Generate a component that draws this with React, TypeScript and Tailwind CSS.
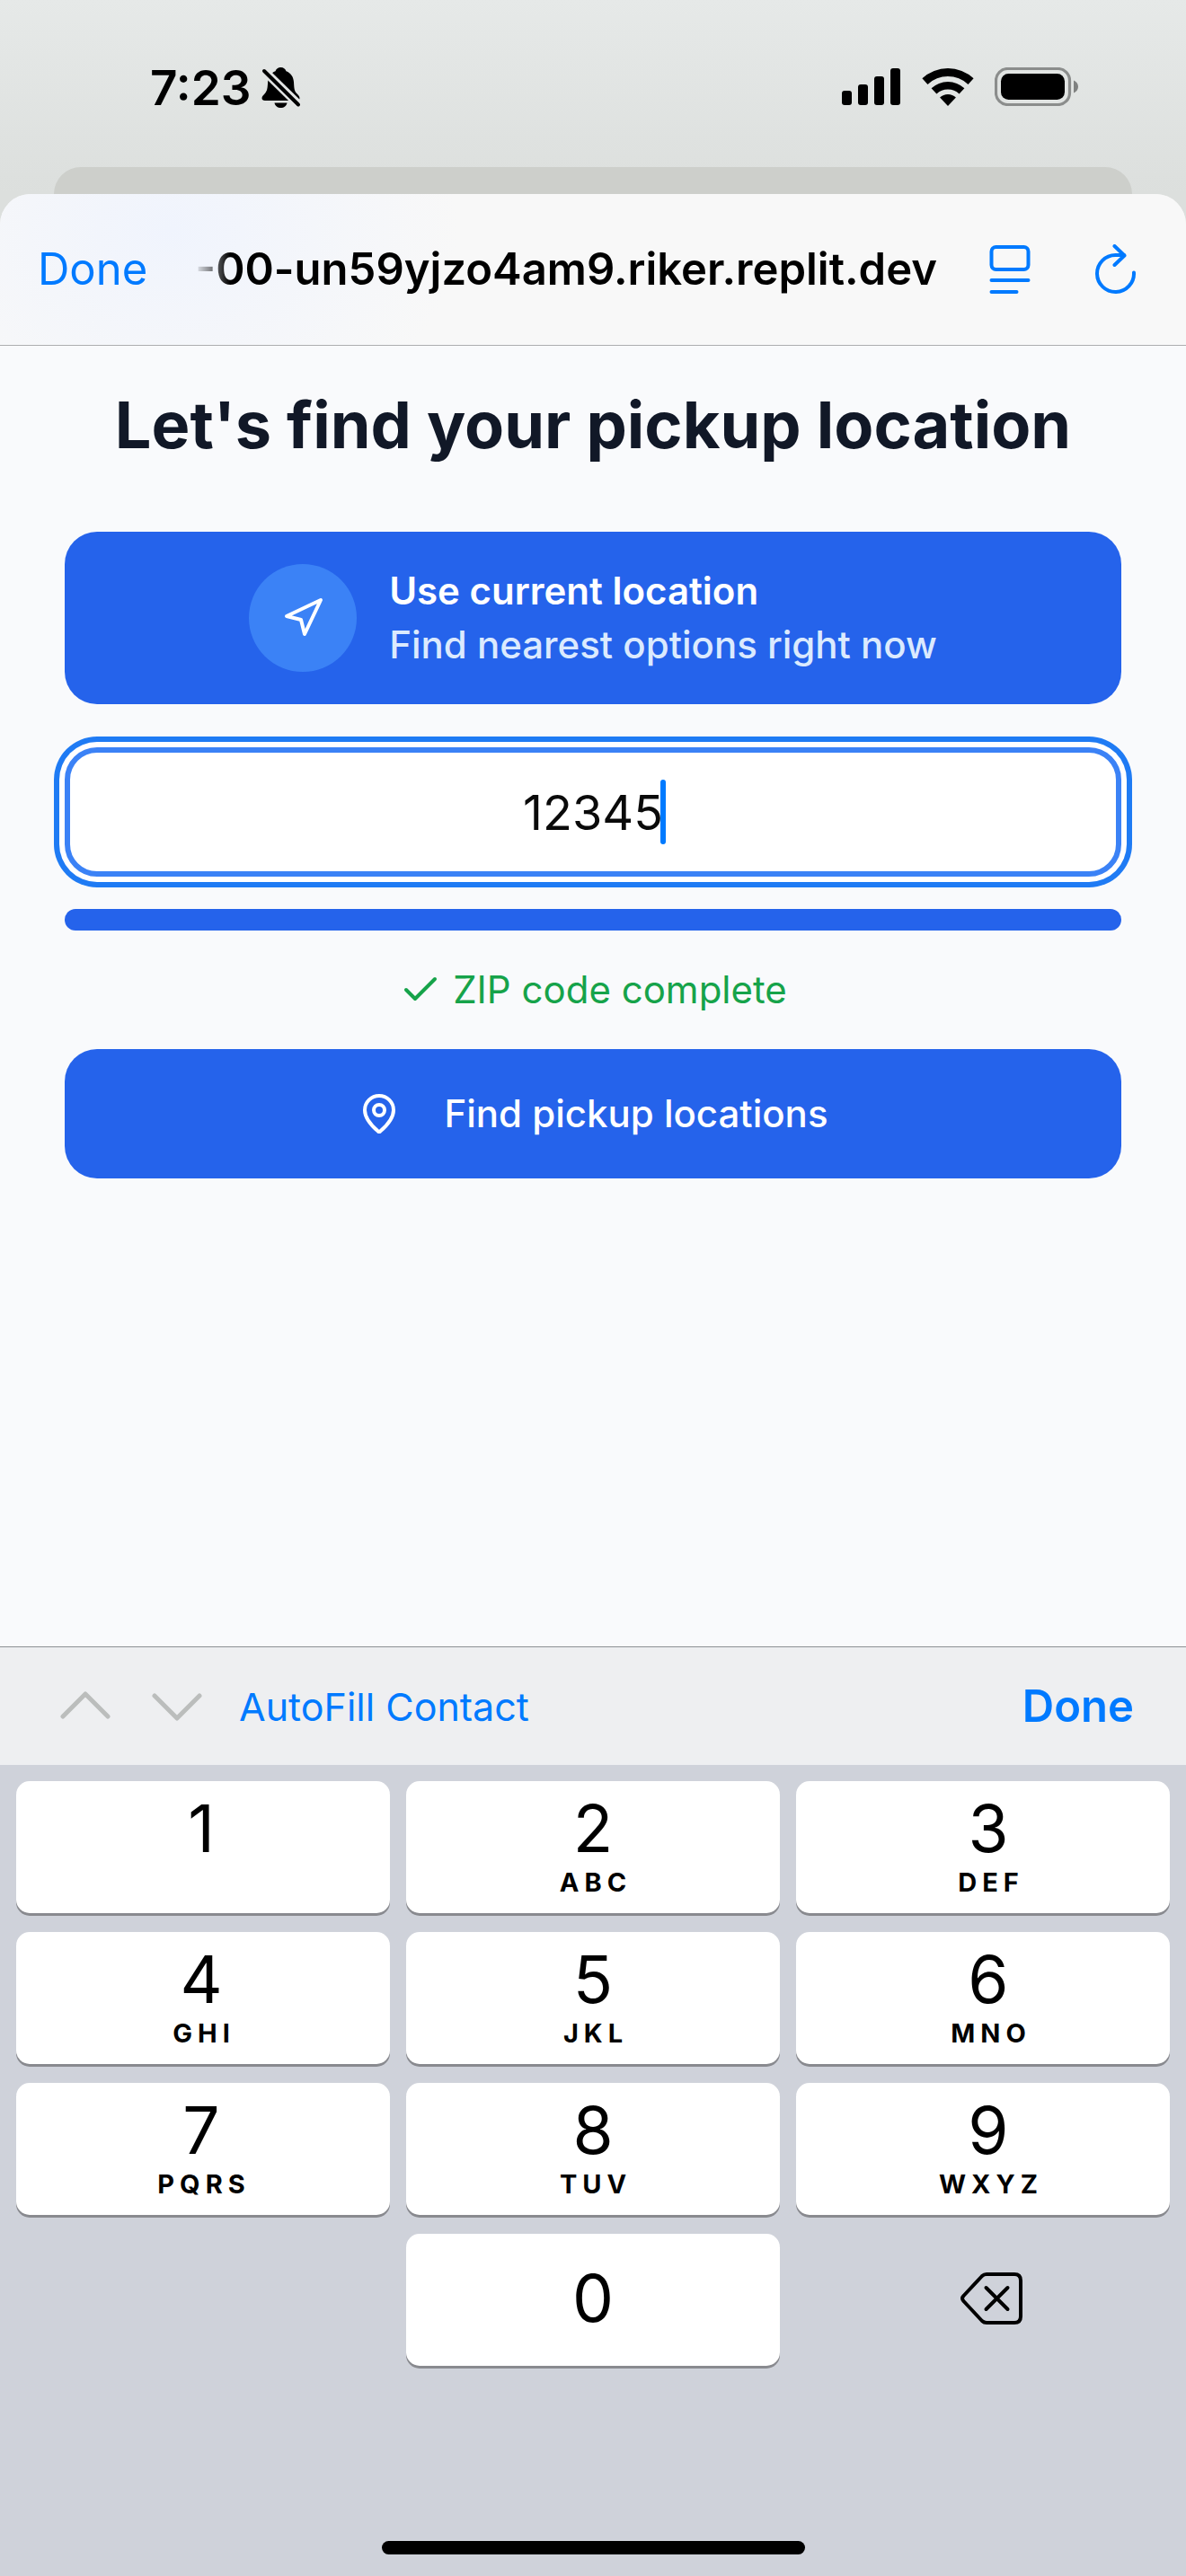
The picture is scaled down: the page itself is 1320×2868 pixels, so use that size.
import type { ReactNode } from "react";
import { Check, MapPin, Navigation } from "lucide-react";

const KEYS = [
  { digit: "1", letters: "" },
  { digit: "2", letters: "ABC" },
  { digit: "3", letters: "DEF" },
  { digit: "4", letters: "GHI" },
  { digit: "5", letters: "JKL" },
  { digit: "6", letters: "MNO" },
  { digit: "7", letters: "PQRS" },
  { digit: "8", letters: "TUV" },
  { digit: "9", letters: "WXYZ" },
];

function BellOffIcon() {
  return (
    <svg width="44" height="46" viewBox="0 0 44 46" fill="none" aria-hidden="true">
      <path
        d="M21.500 0c3 0 5.200 1.800 6 4.200 5.200 2 8.200 6.300 8.500 12.300.4 7.500.6 9.600 3.200 12.600 1.600 1.900 3.300 3 3.300 5.100 0 1.800-1.300 2.800-3.400 2.800H4c-2.200 0-3.500-1-3.500-2.800 0-2.300 1.900-3.400 3.600-5.500 2.300-2.800 2.600-5 3-12.200.3-6 3.300-10.300 8.400-12.300C16.300 1.800 18.500 0 21.500 0Z"
        fill="black"
      />
      <path d="M14.500 39.500h14c-.6 3.300-3.400 5.600-7 5.600s-6.400-2.300-7-5.600Z" fill="black" />
      <path d="M-2 -1 45 45" stroke="#e3e5e4" strokeWidth="9.500" />
      <path d="M3 4 41 41.500" stroke="black" strokeWidth="4" strokeLinecap="round" />
    </svg>
  );
}

function SignalIcon() {
  return (
    <svg width="66" height="42" viewBox="0 0 66 42" aria-hidden="true">
      <rect x="0" y="25" width="11" height="16" rx="3" />
      <rect x="18" y="18" width="11" height="23" rx="3" />
      <rect x="36" y="9" width="11" height="32" rx="3" />
      <rect x="54" y="0" width="11" height="41" rx="3" />
    </svg>
  );
}

function WifiIcon() {
  return (
    <svg width="58" height="42" viewBox="0 0 58 42" aria-hidden="true">
      <path d="M.4 11.300A42 42 0 0 1 57.600 11.300L51.500 17.900A33 33 0 0 0 6.500 17.900Z" />
      <path d="M10.600 22.300A27 27 0 0 1 47.400 22.300L41.600 28.500A18.500 18.500 0 0 0 16.400 28.500Z" />
      <path d="M20.100 32.500A13 13 0 0 1 37.900 32.500L29 42Z" />
    </svg>
  );
}

function BatteryIcon() {
  return (
    <svg width="94" height="43" viewBox="0 0 94 43" aria-hidden="true">
      <rect x="1.500" y="1.500" width="82" height="40" rx="13" fill="none" stroke="#8b8d8c" strokeWidth="3.200" />
      <rect x="7" y="7" width="71" height="29" rx="8.500" />
      <path d="M88 14.500c3 1.200 5 3.900 5 7s-2 5.800-5 7Z" fill="#7f8180" />
    </svg>
  );
}

function PageMenuIcon() {
  return (
    <svg width="46" height="54" viewBox="0 0 46 54" fill="none" stroke="#007aff" strokeWidth="4" strokeLinecap="round" aria-hidden="true">
      <rect x="2.500" y="2" width="41" height="25" rx="5" />
      <path d="M2.500 39h41M2.500 52h28" />
    </svg>
  );
}

function ReloadIcon() {
  return (
    <svg width="46" height="56" viewBox="0 0 46 56" fill="none" stroke="#007aff" strokeWidth="4" strokeLinecap="round" strokeLinejoin="round" aria-hidden="true">
      <path d="M43 31.500A20.500 20.500 0 1 1 22.500 12H32" />
      <path d="M21.500 2 32.500 12.500 21.500 23" />
    </svg>
  );
}

function ChevronIcon({ up = false }: { up?: boolean }) {
  return (
    <svg width="56" height="35" viewBox="0 0 56 35" fill="none" stroke="#bbbdbc" strokeWidth="5" strokeLinecap="round" strokeLinejoin="round" aria-hidden="true">
      <path d={up ? "M3 29 28 4l25 25" : "M3 6l25 25L53 6"} />
    </svg>
  );
}

function DeleteIcon() {
  return (
    <svg width="70" height="60" viewBox="0 0 70 60" fill="none" stroke="black" strokeWidth="4" strokeLinecap="round" strokeLinejoin="round" aria-hidden="true">
      <path d="M29 3h31c4.500 0 7 2.500 7 7v40c0 4.500-2.500 7-7 7H29c-2 0-3.500-.6-5-2L3.500 33c-2-2-2-4 0-6L24 5c1.500-1.400 3-2 5-2Z" />
      <path d="M28.500 18l24 24M52.500 18l-24 24" />
    </svg>
  );
}

function Key({ label, children }: { label: string; children: ReactNode }) {
  return (
    <button
      type="button"
      aria-label={label}
      className="flex h-[147px] flex-col items-center rounded-[15px] bg-white pt-2 text-black shadow-[0_3px_0_#898a8f] nth-[3n]:pl-3 nth-[3n+1]:pr-1"
    >
      {children}
    </button>
  );
}

export default function App() {
  return (
    <div className="flex min-h-screen flex-col bg-[#dcdfdd] font-['Inter','Liberation_Sans',sans-serif]">
      <div className="bg-gradient-to-b from-[#e6e9e8] to-[#dcdfdd]">
        <div className="flex h-[186px] items-start justify-between pt-[75px] pr-[119px] pl-[167px]">
          <div className="flex items-center gap-3">
            <span className="text-[53px] leading-[46px] font-semibold">7:23</span>
            <BellOffIcon />
          </div>
          <div className="flex items-center gap-[23px]">
            <SignalIcon />
            <WifiIcon />
            <BatteryIcon />
          </div>
        </div>
        <div className="mx-[60px] h-[30px] rounded-t-[30px] bg-[#cdcfcb]" />
      </div>

      <div className="flex grow flex-col">
        <header className="flex h-[169px] items-center rounded-t-[34px] border-b border-[#adaeb0] bg-[#f8f8f8] bg-[radial-gradient(ellipse_320px_240px_at_190px_40px,#f0f4fd,#f8f8f8)] pr-[55px] pl-[42px]">
          <button type="button" className="text-[49px] leading-[60px] text-[#007aff]">
            Done
          </button>
          <div className="ml-[52px] flex min-w-0 grow justify-end overflow-hidden text-[49px] leading-[60px] font-semibold whitespace-nowrap text-black [mask-image:linear-gradient(to_right,transparent,black_40px)]">
            -00-un59yjzo4am9.riker.replit.dev
          </div>
          <button type="button" aria-label="Page menu" className="ml-[58px]">
            <PageMenuIcon />
          </button>
          <button type="button" aria-label="Reload" className="ml-[72px]">
            <ReloadIcon />
          </button>
        </header>

        <main className="flex grow flex-col bg-[#f9fafc] px-[72px] pt-[43px] pb-12">
          <h1 className="text-center text-[72px] leading-[90px] font-bold text-[#111827]">
            Let's find your pickup location
          </h1>

          <div className="mt-[74px] flex flex-col gap-9">
            <button
              type="button"
              className="mb-3 flex h-48 items-center justify-center gap-9 rounded-[36px] bg-[#2563eb] text-left text-[42px] leading-[60px] font-medium"
            >
              <span className="flex size-[120px] items-center justify-center rounded-full bg-[#3b82f6] text-white">
                <Navigation size={48} strokeWidth={2} />
              </span>
              <span className="flex flex-col">
                <span className="font-semibold text-white">Use current location</span>
                <span className="text-[#dbeafe]">Find nearest options right now</span>
              </span>
            </button>

            <div className="relative flex">
              <input
                type="text"
                inputMode="numeric"
                aria-label="ZIP code"
                defaultValue="12345"
                className="h-36 w-full rounded-[36px] border-[6px] border-[#3b82f6] bg-white text-center text-[54px] text-[#0a0a0a] caret-transparent shadow-[0_0_0_6px_#ffffff,0_0_0_12px_#1f7bf4] outline-none"
              />
              <span className="absolute top-9 left-1/2 ml-[75px] h-[72px] w-[6px] rounded-full bg-[#007aff]" />
            </div>

            <div
              role="progressbar"
              aria-label="ZIP code progress"
              aria-valuenow={100}
              className="h-6 rounded-full bg-[#2563eb]"
            />

            <p className="flex items-center justify-center gap-3 text-[42px] leading-[60px] text-[#16a34a]">
              <Check size={48} strokeWidth={2} />
              ZIP code complete
            </p>

            <button
              type="button"
              className="flex h-36 items-center justify-center gap-12 rounded-[36px] bg-[#2563eb] text-[42px] leading-[60px] font-medium text-white"
            >
              <MapPin size={48} strokeWidth={2} />
              Find pickup locations
            </button>
          </div>
        </main>

        <div className="flex h-[132px] items-center border-t border-[#8d9094] bg-[#eeeff1] pr-[58px] pl-[67px] text-[#007aff]">
          <button type="button" aria-label="Previous field" disabled>
            <ChevronIcon up />
          </button>
          <button type="button" aria-label="Next field" disabled className="ml-[46px]">
            <ChevronIcon />
          </button>
          <button type="button" className="ml-[41px] text-[43px] leading-[60px]">
            AutoFill Contact
          </button>
          <button type="button" className="ml-auto text-[49px] leading-[60px] font-semibold">
            Done
          </button>
        </div>

        <div className="flex flex-col bg-[#cfd2da] px-[18px] pt-[18px] pb-6">
          <div className="grid grid-cols-3 gap-x-[18px] gap-y-[21px]">
            {KEYS.map((key) => (
              <Key key={key.digit} label={key.digit}>
                <span className="text-[73px] leading-[90px]">{key.digit}</span>
                <span className="pl-[6px] text-[29px] leading-[30px] font-bold tracking-[6px]">{key.letters}</span>
              </Key>
            ))}
            <button
              type="button"
              aria-label="0"
              className="col-start-2 flex h-[147px] items-center justify-center rounded-[15px] bg-white pb-1 text-[73px] leading-[90px] text-black shadow-[0_3px_0_#898a8f]"
            >
              0
            </button>
            <button type="button" aria-label="Delete" className="flex items-center justify-center pb-1 pl-5">
              <DeleteIcon />
            </button>
          </div>
          <div className="mt-[195px] h-[15px] w-[471px] self-center rounded-full bg-black" />
        </div>
      </div>
    </div>
  );
}
